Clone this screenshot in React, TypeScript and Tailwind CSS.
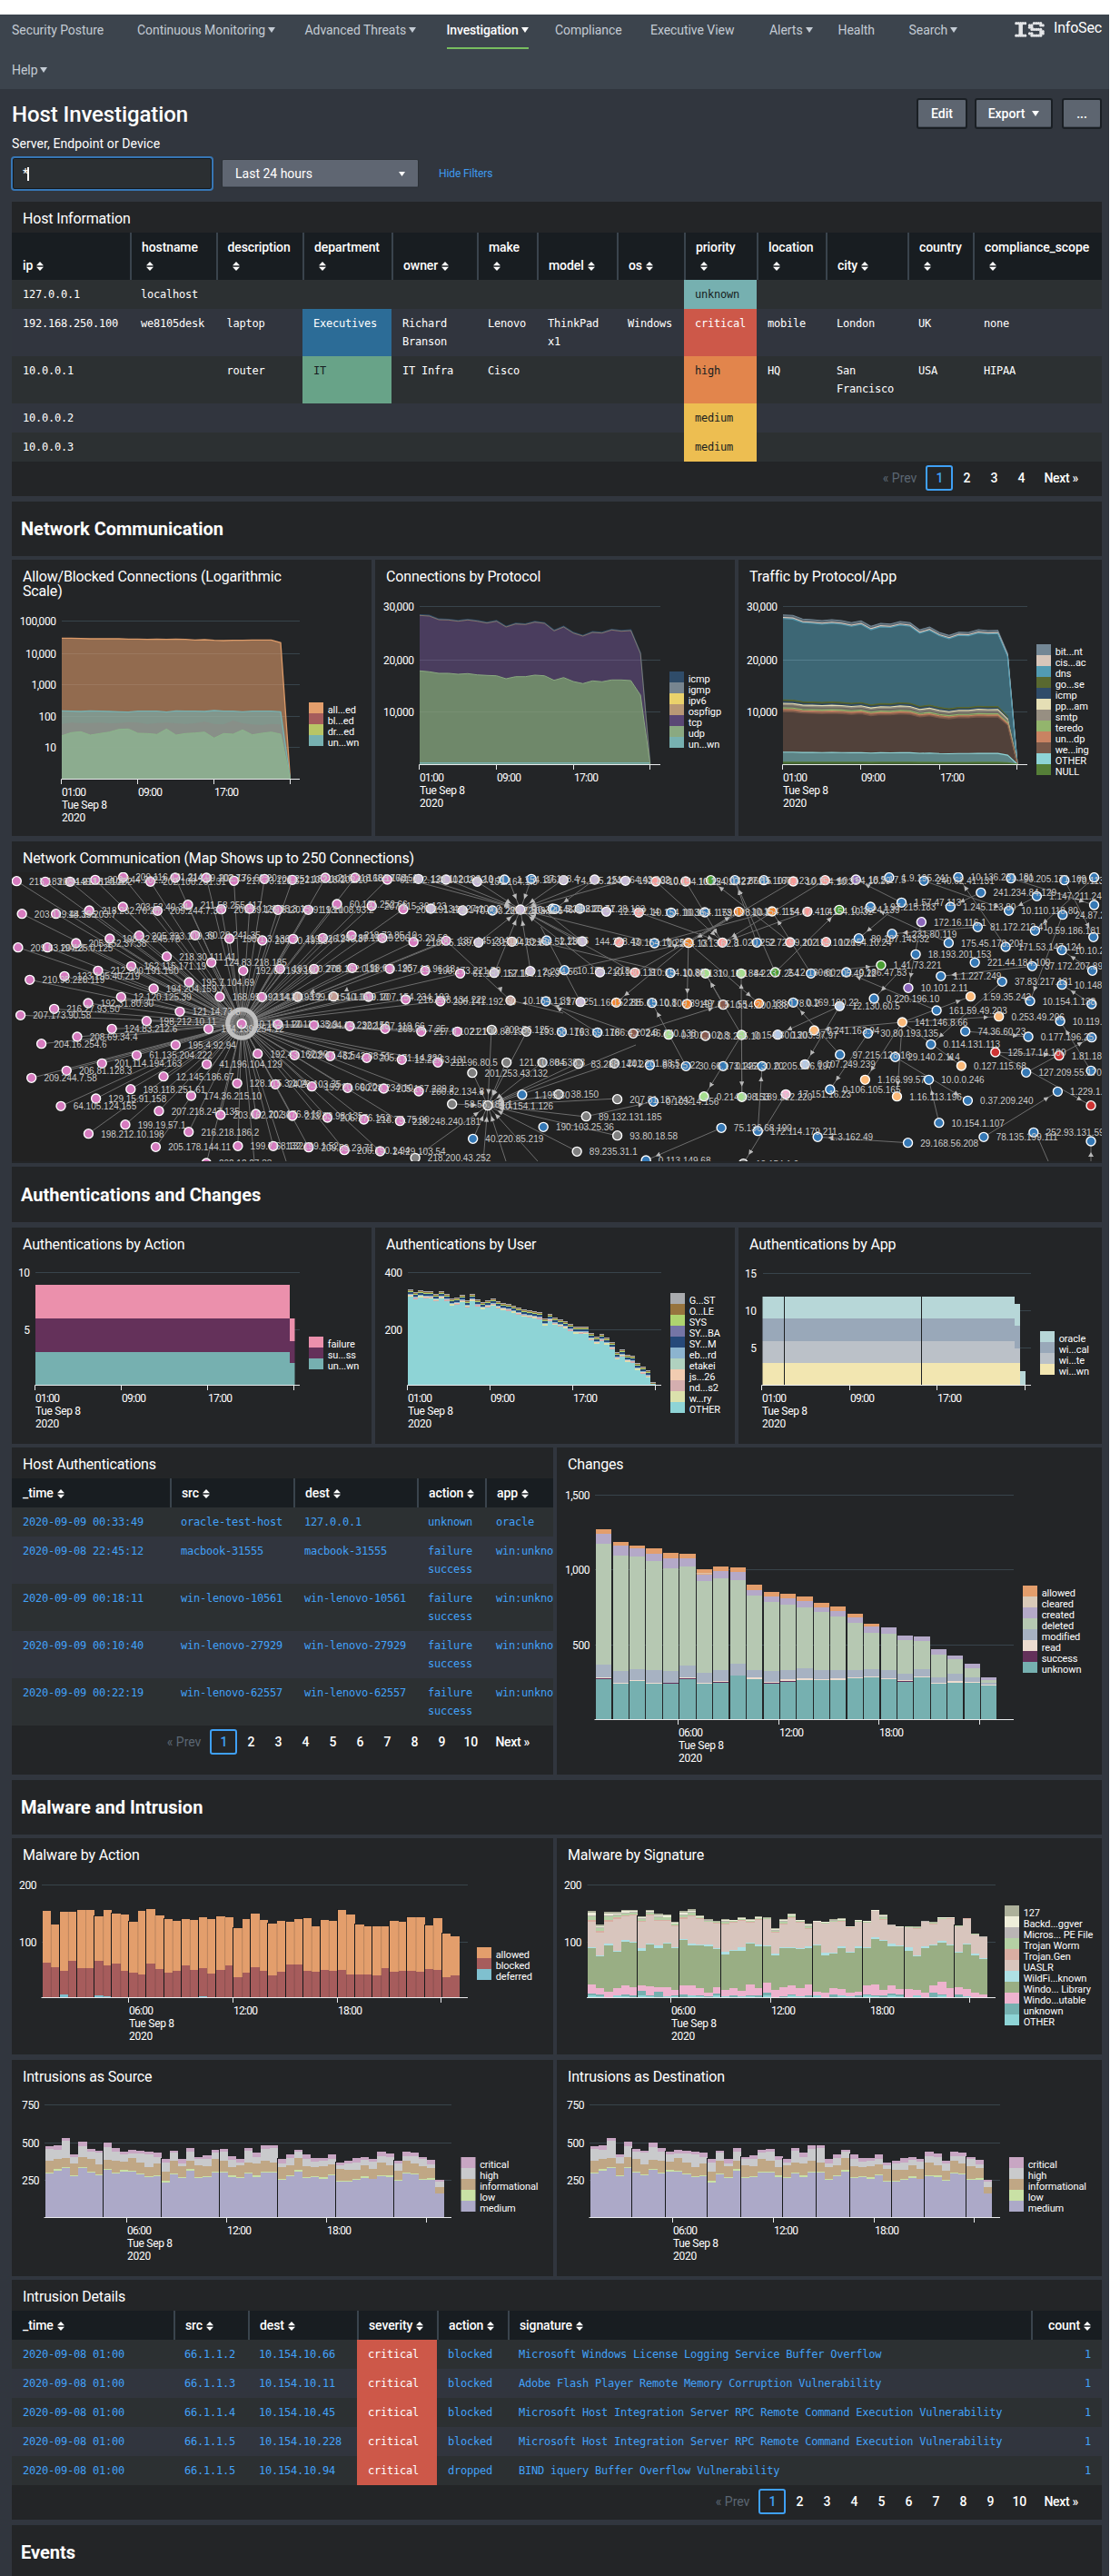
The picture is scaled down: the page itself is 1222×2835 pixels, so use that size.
import React from "react";

type Pt = [number, number];

const TEXT = "#ffffff";
const GRID = "#38444b";

/* ---------- shared bits ---------- */

function Caret({ className = "" }: { className?: string }) {
  return (
    <svg className={"inline-block " + className} width="8" height="6" viewBox="0 0 8 6">
      <path d="M0 0h8L4 6z" fill="currentColor" />
    </svg>
  );
}

function Sort({ className = "" }: { className?: string }) {
  return (
    <svg className={"inline-block align-[-1px] " + className} width="8" height="10" viewBox="0 0 8 10">
      <path d="M0 4.3L4 0l4 4.3zM0 5.7h8L4 10z" fill="#fff" />
    </svg>
  );
}

function Panel({ title, className = "", children }: { title: React.ReactNode; className?: string; children?: React.ReactNode }) {
  return (
    <section className={"flex flex-col overflow-hidden bg-[#232527] " + className}>
      <h3 className="shrink-0 px-3 pt-[11px] pb-[7px] text-[16px] leading-4 tracking-[-0.16px] text-white">{title}</h3>
      {children}
    </section>
  );
}

function Section({ title, className = "" }: { title: string; className?: string }) {
  return (
    <div className={"flex h-[60px] shrink-0 items-center bg-[#232527] pl-2.5 " + className}>
      <h2 className="text-[20px] leading-6 font-bold text-white">{title}</h2>
    </div>
  );
}

function Pager({ last }: { last: number }) {
  const pages = Array.from({ length: last - 1 }, (_, i) => i + 2);
  return (
    <div className="flex h-9 items-center justify-end pr-[26px] text-[14px] font-medium text-white">
      <span className="mr-2.5 font-normal text-[#5c6773]">« Prev</span>
      <span className="flex h-7 w-[30px] items-center justify-center rounded-[3px] border-2 border-[#3fa0f5] text-[#3fa0f5]">1</span>
      {pages.map((p) => (
        <span key={p} className={p > 9 ? "w-[34px] text-center" : "w-[30px] text-center"}>{p}</span>
      ))}
      <span className="ml-2.5 tracking-[-0.3px]">Next »</span>
    </div>
  );
}

/* ---------- navigation ---------- */

const NAV: { t: string; w: string; caret?: boolean; on?: boolean }[] = [
  { t: "Security Posture", w: "w-[138px]" },
  { t: "Continuous Monitoring", w: "w-[184.5px]", caret: true },
  { t: "Advanced Threats", w: "w-[156px]", caret: true },
  { t: "Investigation", w: "w-[119.5px]", caret: true, on: true },
  { t: "Compliance", w: "w-[105px]" },
  { t: "Executive View", w: "w-[131px]" },
  { t: "Alerts", w: "w-[75.5px]", caret: true },
  { t: "Health", w: "w-[78px]" },
  { t: "Search", w: "w-[90px]", caret: true },
  { t: "Help", w: "w-[60px]", caret: true },
];

const LOGO_ROWS = ["11111..01111.", "..1...11...11", "..1...11.....", "..1....11111.", "..1........11", "..1...11...11", "11111..11111."];

function Logo() {
  return (
    <svg width="33" height="17" viewBox="0 0 33 17">
      {LOGO_ROWS.map((row, r) =>
        row.split("").map((c, i) => (c === "1" ? <circle key={r + "-" + i} cx={1.8 + i * 2.45} cy={1.7 + r * 2.25} r="1.6" fill="#e4e6e8" /> : null)),
      )}
      <path d="M6.7 2v13" stroke="#e4e6e8" strokeWidth="4.4" />
    </svg>
  );
}

function Nav() {
  return (
    <header className="flex h-[82px] bg-[#3c444d]">
      <nav className="flex w-[1117px] shrink-0 flex-wrap content-start pl-[13px]">
        {NAV.map((n) => (
          <div key={n.t} className={"h-11 " + n.w}>
            <span
              className={
                "relative inline-flex h-[38px] items-center gap-[3px] pb-0.5 text-[14px] tracking-[-0.05px] whitespace-nowrap " +
                (n.on ? "border-b-2 border-[#78bd5f] font-medium tracking-[-0.15px] text-white" : "border-b-2 border-transparent text-[#c3cbd4]")
              }
            >
              {n.t}
              {n.caret && <Caret />}
            </span>
          </div>
        ))}
      </nav>
      <div className="flex h-8 items-center">
        <Logo />
        <span className="ml-[10px] pb-0.5 text-[16px] tracking-[-0.2px] text-white">InfoSec</span>
      </div>
    </header>
  );
}

/* ---------- tables ---------- */

const MONO = "font-['DejaVu_Sans_Mono',monospace] text-[12px] leading-5 tracking-[-0.22px]";

type Cell = string | { t: string; c: string };

function Table({
  cols,
  rows,
  wrapped = [],
  link = false,
  tall = false,
  lastRight = false,
}: {
  cols: [string, number][];
  rows: Cell[][];
  wrapped?: number[];
  link?: boolean;
  tall?: boolean;
  lastRight?: boolean;
}) {
  const width = cols.reduce((a, c) => a + c[1], 0);
  return (
    <table className="shrink-0 table-fixed border-collapse" style={{ width }}>
      <colgroup>
        {cols.map(([n, w]) => (
          <col key={n} style={{ width: w }} />
        ))}
      </colgroup>
      <thead>
        <tr className={"bg-[#181d21] " + (tall ? "h-[52px]" : "h-8")}>
          {cols.map(([n], i) => (
            <th
              key={n}
              className={
                "px-3 py-1.5 align-bottom text-[14px] leading-5 font-medium tracking-[-0.1px] whitespace-nowrap text-white " +
                (i ? "shadow-[inset_2px_0_0_#3a444d] " : "") +
                (lastRight && i === cols.length - 1 ? "text-right" : "text-left")
              }
            >
              {i ? <span className="inline-block w-[1px]" /> : null}
              {n}
              {wrapped.includes(i) ? (
                <>
                  <br />
                  <Sort className="ml-[6px]" />
                </>
              ) : (
                <Sort className="ml-1" />
              )}
            </th>
          ))}
        </tr>
      </thead>
      <tbody>
        {rows.map((r, ri) => (
          <tr key={ri} className={ri % 2 ? "bg-[#31353e]" : "bg-[#2c3032]"}>
            {r.map((c, i) => {
              const t = typeof c === "string" ? c : c.t;
              const cls = typeof c === "string" ? (link ? "text-[#42a1f8]" : "text-white") : c.c;
              return (
                <td
                  key={i}
                  className={"h-8 px-3 py-1.5 align-top whitespace-pre " + MONO + " " + cls + (lastRight && i === cols.length - 1 ? " text-right" : "")}
                >
                  {t}
                </td>
              );
            })}
          </tr>
        ))}
      </tbody>
    </table>
  );
}

const UNKNOWN = { t: "unknown", c: "bg-[#76b0b0] text-[#171d21]" };
const CRIT = { t: "critical", c: "bg-[#cd5849] text-white font-medium" };
const HIGH = { t: "high", c: "bg-[#e2854c] text-[#171d21]" };
const MEDIUM = { t: "medium", c: "bg-[#edbe51] text-[#171d21]" };

const HOST_COLS: [string, number][] = [
  ["ip", 130], ["hostname", 94.5], ["description", 95.5], ["department", 98], ["owner", 94], ["make", 66], ["model", 88],
  ["os", 74], ["priority", 80], ["location", 76], ["city", 90], ["country", 72], ["compliance_scope", 142],
];
const HOST_ROWS: Cell[][] = [
  ["127.0.0.1", "localhost", "", "", "", "", "", "", UNKNOWN, "", "", "", ""],
  ["192.168.250.100", "we8105desk", "laptop", { t: "Executives", c: "bg-[#2c6c97] text-white" }, "Richard\nBranson", "Lenovo", "ThinkPad\nx1", "Windows", CRIT, "mobile", "London", "UK", "none"],
  ["10.0.0.1", "", "router", { t: "IT", c: "bg-[#68a388] text-[#171d21]" }, "IT Infra", "Cisco", "", "", HIGH, "HQ", "San\nFrancisco", "USA", "HIPAA"],
  ["10.0.0.2", "", "", "", "", "", "", "", MEDIUM, "", "", "", ""],
  ["10.0.0.3", "", "", "", "", "", "", "", MEDIUM, "", "", "", ""],
];

const AUTH_COLS: [string, number][] = [["_time", 174], ["src", 136], ["dest", 136], ["action", 75], ["app", 111]];
const AUTH_ROWS: Cell[][] = [
  ["2020-09-09 00:33:49", "oracle-test-host", "127.0.0.1", "unknown", "oracle"],
  ["2020-09-08 22:45:12", "macbook-31555", "macbook-31555", "failure\nsuccess", "win:unknown"],
  ["2020-09-09 00:18:11", "win-lenovo-10561", "win-lenovo-10561", "failure\nsuccess", "win:unknown"],
  ["2020-09-09 00:10:40", "win-lenovo-27929", "win-lenovo-27929", "failure\nsuccess", "win:unknown"],
  ["2020-09-09 00:22:19", "win-lenovo-62557", "win-lenovo-62557", "failure\nsuccess", "win:unknown"],
];

const INTR_COLS: [string, number][] = [["_time", 178], ["src", 82], ["dest", 120], ["severity", 88], ["action", 78], ["signature", 576], ["count", 78]];
const INTR_ROWS: Cell[][] = [
  ["2020-09-08 01:00", "66.1.1.2", "10.154.10.66", CRIT, "blocked", "Microsoft Windows License Logging Service Buffer Overflow", "1"],
  ["2020-09-08 01:00", "66.1.1.3", "10.154.10.11", CRIT, "blocked", "Adobe Flash Player Remote Memory Corruption Vulnerability", "1"],
  ["2020-09-08 01:00", "66.1.1.4", "10.154.10.45", CRIT, "blocked", "Microsoft Host Integration Server RPC Remote Command Execution Vulnerability", "1"],
  ["2020-09-08 01:00", "66.1.1.5", "10.154.10.228", CRIT, "blocked", "Microsoft Host Integration Server RPC Remote Command Execution Vulnerability", "1"],
  ["2020-09-08 01:00", "66.1.1.5", "10.154.10.94", CRIT, "dropped", "BIND iquery Buffer Overflow Vulnerability", "1"],
];

/* ---------- charts ---------- */

function Chart({ box, children }: { box: [number, number, number, number]; children: React.ReactNode }) {
  return (
    <svg className="block shrink-0" width={box[2]} height={box[3]} viewBox={box.join(" ")} fontFamily="Roboto, sans-serif" fontSize="12">
      {children}
    </svg>
  );
}

function Grid({ x, ys, labels, right }: { x: Pt; ys: number[]; labels: string[]; right: number }) {
  return (
    <g>
      {ys.map((y, i) => (
        <g key={i}>
          <line x1={x[0]} x2={x[1]} y1={y} y2={y} stroke={GRID} strokeWidth="1" />
          <text x={right} y={y + 4.6} fill={TEXT} textAnchor="end" letterSpacing="-0.45">{labels[i]}</text>
        </g>
      ))}
    </g>
  );
}

function Axis({ x, base, ticks, labels }: { x: Pt; base: number; ticks: number[]; labels: string[] }) {
  return (
    <g>
      <line x1={x[0] - 0.5} x2={x[1]} y1={base} y2={base} stroke="#e8eaec" strokeWidth="1" />
      {ticks.map((t) => (
        <line key={t} x1={t} x2={t} y1={base} y2={base + 5.5} stroke="#e8eaec" strokeWidth="1" />
      ))}
      {labels.map((l, i) => (
        <text key={l} x={ticks[i] + 0.5} y={base + 18.2} fill={TEXT} letterSpacing="-0.75">{l}</text>
      ))}
      <text x={ticks[0] + 0.5} y={base + 32.3} fill={TEXT} letterSpacing="-0.3">Tue Sep 8</text>
      <text x={ticks[0] + 0.5} y={base + 46.3} fill={TEXT} letterSpacing="-0.25">2020</text>
    </g>
  );
}

function Legend({ x, y, items }: { x: number; y: number; items: [string, string][] }) {
  return (
    <g>
      {items.map(([name, color], i) => (
        <g key={name + i}>
          <rect x={x} y={y + i * 12} width="16" height="12" fill={color} />
          <text x={x + 20.7} y={y + i * 12 + 11.6} fill={TEXT} fontSize="11" letterSpacing="-0.1">{name}</text>
        </g>
      ))}
    </g>
  );
}

function area(x0: number, step: number, top: number[], base: number) {
  return `M${x0} ${base}` + top.map((y, i) => `L${(x0 + i * step).toFixed(1)} ${y.toFixed(1)}`).join("") + `L${(x0 + (top.length - 1) * step).toFixed(1)} ${base}Z`;
}
function line(x0: number, step: number, top: number[]) {
  return "M" + top.map((y, i) => `${(x0 + i * step).toFixed(1)} ${y.toFixed(1)}`).join("L");
}
function band(x0: number, step: number, top: number[], bot: number[]) {
  return line(x0, step, top) + "L" + bot.map((y, i) => `${(x0 + i * step).toFixed(1)} ${y.toFixed(1)}`).reverse().join("L") + "Z";
}

const at = (o: number, k = 3) => (v: number) => o + v / k;

const DROPPED = [599, 589, 586, 597, 592, 587, 578, 577, 591, 592, 595, 577, 597, 592, 590, 587, 607, 592, 594, 580, 596, 591, 587, 594, 742].map(at(610));
const ALLOWED = [277, 277, 278, 279, 279, 279, 279, 280, 280, 281, 280, 281, 280, 281, 283, 282, 284, 285, 284, 284, 283, 283, 283, 292, 742].map(at(610));
const UNK = [517, 518, 519, 517, 518, 519, 520, 521, 518, 518, 518, 521, 517, 518, 518, 519, 516, 518, 518, 520, 518, 518, 518, 520, 742].map(at(610));
const BLOCKED = [560, 556, 557, 557, 556, 558, 557, 555, 556, 560, 557, 556, 558, 560, 558, 553, 560, 562, 549, 558, 562, 564, 560, 562, 742].map(at(610));

function AllowBlocked() {
  const s = 10.48;
  return (
    <Chart box={[13, 669, 396, 251]}>
      <Grid x={[68, 330]} ys={[683.5, 719.5, 753.5, 788.5, 822.5]} labels={["100,000", "10,000", "1,000", "100", "10"]} right={61.5} />
      <path d={area(68, s, ALLOWED, 857)} fill="#e39e6c" fillOpacity=".58" />
      <path d={line(68, s, ALLOWED)} fill="none" stroke="#dc9a68" strokeWidth="1.3" />
      <path d={area(68, s, UNK, 857)} fill="#77b1b1" fillOpacity=".62" />
      <path d={line(68, s, UNK)} fill="none" stroke="#77b1b1" strokeWidth="1.3" />
      <path d={area(68, s, BLOCKED, 857)} fill="#8e8a86" fillOpacity=".6" />
      <path d={area(68, s, DROPPED, 857)} fill="#8fb893" fillOpacity=".7" />
      <path d={line(68, s, DROPPED)} fill="none" stroke="#8bb58b" strokeWidth="1" />
      <Axis x={[68, 330]} base={857.5} ticks={[67.5, 151.5, 235.5, 319.5]} labels={["01:00", "09:00", "17:00"]} />
      <Legend x={340} y={773} items={[["all...ed", "#e39e6c"], ["bl...ed", "#a65c5c"], ["dr...ed", "#b8c566"], ["un...wn", "#77b1b1"]]} />
    </Chart>
  );
}

const TCP = [202, 204, 216, 217, 221, 217, 221, 227, 221, 240, 230, 232, 224, 228, 253, 240, 260, 270, 258, 260, 250, 254, 252, 328, 693].map(at(610));
const UDP = [385, 388, 393, 393, 396, 394, 398, 400, 401, 411, 404, 404, 399, 401, 416, 407, 420, 427, 418, 421, 415, 415, 417, 465, 693].map(at(610));

function ByProtocol() {
  const s = 10.57;
  return (
    <Chart box={[413, 650, 396, 270]}>
      <Grid x={[462, 727]} ys={[667.5, 726.5, 783.5]} labels={["30,000", "20,000", "10,000"]} right={455.5} />
      <path d={area(462, s, TCP, 841)} fill="#5a4775" fillOpacity=".72" />
      <path d={area(462, s, UDP, 841)} fill="#232527" />
      <path d={area(462, s, UDP, 841)} fill="#8aa981" fillOpacity=".75" />
      <path d="M462 726.5h250M462 783.5h250" stroke="#fff" strokeOpacity=".06" />
      <path d={line(462, s, TCP.map((y) => y - 0.7))} fill="none" stroke="#2f4c69" strokeWidth="1.4" />
      <path d={line(462, s, TCP)} fill="none" stroke="#b89b78" strokeWidth=".6" />
      <path d={line(462, s, UDP)} fill="none" stroke="#8aa981" strokeWidth="1" />
      <path d="M462 839.8h253" stroke="#77b1b1" strokeWidth="1.6" />
      <Axis x={[462, 727]} base={841.5} ticks={[461.5, 546.5, 631.5, 715.5]} labels={["01:00", "09:00", "17:00"]} />
      <Legend x={737} y={739} items={[["icmp", "#2f4c69"], ["igmp", "#778590"], ["ipv6", "#ead26b"], ["ospfigp", "#b89876"], ["tcp", "#5a4775"], ["udp", "#8aa981"], ["un...wn", "#77b1b1"]]} />
    </Chart>
  );
}

const APP_LAYERS: [string, string, number][] = [
  ["bit...nt", "#738795", 1],
  ["cis...ac", "#d7c6ba", 0.983],
  ["dns", "#529bb2", 0.975],
  ["go...se", "#596930", 0.43],
  ["icmp", "#2f4c69", 0.418],
  ["pp...am", "#e5dfb5", 0.408],
  ["smtp", "#978f82", 0.399],
  ["teredo", "#93b56d", 0.377],
  ["un...dp", "#c98362", 0.367],
  ["we...ing", "#78594a", 0.352],
  ["OTHER", "#8ed4d6", 0.081],
  ["NULL", "#557f38", 0.014],
];
const APP_TOP = [200, 202, 214, 216, 219, 216, 219, 226, 220, 238, 228, 230, 222, 226, 250, 240, 258, 268, 257, 258, 249, 252, 251, 328, 692].map(at(610));

function ByApp() {
  const s = 10.75;
  return (
    <Chart box={[813, 650, 400, 270]}>
      <Grid x={[862, 1131]} ys={[667.5, 726.5, 783.5]} labels={["30,000", "20,000", "10,000"]} right={855.5} />
      {APP_LAYERS.map(([n, c, f], i) => {
        const t = APP_TOP.map((y) => 841 - (841 - y) * f);
        const b = APP_TOP.map((y) => 841 - (841 - y) * (APP_LAYERS[i + 1]?.[2] ?? 0));
        return (
          <g key={n}>
            <path d={band(862, s, t, b)} fill={c} fillOpacity={i === 9 ? 0.55 : i === 10 ? 0.55 : i === 2 ? 0.56 : 0.65} />
            <path d={line(862, s, t)} fill="none" stroke={c} strokeWidth="1.1" />
          </g>
        );
      })}
      <path d="M862 726.5h250" stroke="#fff" strokeOpacity=".07" />
      <Axis x={[862, 1131]} base={841.5} ticks={[861.5, 947.5, 1034.5, 1119.5]} labels={["01:00", "09:00", "17:00"]} />
      <Legend x={1141} y={709} items={APP_LAYERS.map(([n, c]) => [n, c] as [string, string])} />
    </Chart>
  );
}

function AuthAction() {
  return (
    <Chart box={[13, 1385, 396, 204]}>
      <Grid x={[39, 330]} ys={[1400.5, 1463.5]} labels={["10", "5"]} right={32.5} />
      <path d="M39 1414h280v37h-280z" fill="#eb90ac" />
      <path d="M39 1451h280v37h-280z" fill="#64315a" />
      <path d="M39 1488h280v36h-280z" fill="#76b0b0" />
      <path d="M319 1451h5.5v25h-5.5z" fill="#eb90ac" />
      <path d="M319 1476h5.5v24h-5.5z" fill="#64315a" />
      <path d="M319 1500h5.5v24h-5.5z" fill="#76b0b0" />
      <Axis x={[39, 330]} base={1524.5} ticks={[38.5, 133.5, 228.5, 323.5]} labels={["01:00", "09:00", "17:00"]} />
      <Legend x={340} y={1471} items={[["failure", "#eb90ac"], ["su...ss", "#64315a"], ["un...wn", "#76b0b0"]]} />
    </Chart>
  );
}

const USER_TOP = [
  387, 396, 390, 393, 393, 402, 393, 402, 417, 414, 405, 423, 402, 420, 429, 423, 417, 426, 432, 435, 441, 447, 453, 456, 459, 462, 483, 468, 480, 486,
  492, 501, 510, 510, 510, 531, 543, 534, 546, 561, 594, 585, 602, 606, 630, 642, 654, 693,
].map(at(1290));
const USERS: [string, string][] = [
  ["G...ST", "#a9abae"], ["O...LE", "#97743e"], ["SYS", "#aed46f"], ["SY...BA", "#7575a6"], ["SY...M", "#26497a"], ["eb...rd", "#8cb4cf"],
  ["etakei", "#b0d1bf"], ["js...26", "#f1ccb1"], ["nd...s2", "#d4aeaf"], ["w...ry", "#dbe1ac"], ["OTHER", "#8ed4d6"],
];

function AuthUser() {
  const w = 5.69;
  return (
    <Chart box={[413, 1385, 396, 204]}>
      <Grid x={[449, 728]} ys={[1400.5, 1463.5]} labels={["400", "200"]} right={442.5} />
      <g shapeRendering="crispEdges">
        {USER_TOP.map((y, i) => (
          <g key={i}>
            <rect x={449 + i * w} y={y} width={w} height={1524 - y} fill="#8ed4d6" />
            {[0, 1, 2, 4, 4, 5, 7 + (i % 3), 9 - (i % 2)].map((c, k) => {
              const yy = Math.round(y) + k;
              return yy < 1523 ? <rect key={k} x={449 + i * w} y={yy} width={w} height="1" fill={USERS[c][1]} /> : null;
            })}
          </g>
        ))}
      </g>
      <Axis x={[449, 728]} base={1524.5} ticks={[448.5, 539.5, 630.5, 721.5]} labels={["01:00", "09:00", "17:00"]} />
      <Legend x={738} y={1423} items={USERS} />
    </Chart>
  );
}

function AuthApp() {
  return (
    <Chart box={[813, 1385, 400, 204]}>
      <Grid x={[840, 1135]} ys={[1401.5, 1442.5, 1483.5]} labels={["15", "10", "5"]} right={832.5} />
      <path d="M839.5 1427H1117v8h6v24h-6v-8H839.5z" fill="#b7d7d8" />
      <path d="M839.5 1451H1117v8h6v25h-6v-8H839.5z" fill="#99a8b9" />
      <path d="M839.5 1476H1117v8h6v16H839.5z" fill="#bbc1c8" />
      <path d="M839.5 1500H1123v24H839.5z" fill="#f2e6b1" />
      <path d="M1123 1509h6v15h-6z" fill="#b7d7d8" />
      <path d="M863.5 1427v97M1014.5 1427v97" stroke="#1d2022" strokeWidth="1" />
      <Axis x={[839, 1135]} base={1524.5} ticks={[838.5, 935.5, 1031.5, 1128.5]} labels={["01:00", "09:00", "17:00"]} />
      <Legend x={1145} y={1465} items={[["oracle", "#b7d7d8"], ["wi...cal", "#99a8b9"], ["wi...te", "#bbc1c8"], ["wi...wn", "#f2e6b1"]]} />
    </Chart>
  );
}

/* Stacked columns: `tops` holds the upper edge of each layer, outermost first. */
function Columns({ x, pitch, width, tops, colors, base, gaps = [] }: { x: number; pitch: number; width: number; tops: number[][]; colors: string[]; base: number; gaps?: number[] }) {
  return (
    <g shapeRendering="crispEdges">
      {tops[0].map((_, i) => (
        <g key={i}>
          {tops.map((layer, l) => {
            const top = layer[i];
            const bot = tops[l + 1] ? tops[l + 1][i] : base;
            return bot > top ? <rect key={l} x={x + i * pitch} y={top} width={width} height={bot - top} fill={colors[l]} /> : null;
          })}
        </g>
      ))}
      {gaps.map((g) => (
        <rect key={"gap" + g} x={Math.round(x + g * pitch) - 1} y={tops[0][g] - 1} width="1" height={base - tops[0][g] + 1} fill="#17191b" />
      ))}
    </g>
  );
}

const CH = [
  [309, 351, 363, 372, 387, 390, 441, 432, 435, 492, 516, 522, 531, 552, 564, 588, 621, 633, 660, 663, 705, 726, 753, 798],
  [324, 364, 372, 390, 405, 405, 459, 447, 450, 510, 531, 537, 545, 567, 579, 600, 629, 633, 660, 663, 705, 726, 753, 798],
  [357, 396, 399, 414, 438, 432, 480, 471, 477, 528, 549, 558, 567, 582, 597, 618, 651, 654, 675, 678, 723, 738, 768, 807],
  [756, 777, 771, 774, 777, 759, 783, 774, 753, 774, 777, 774, 768, 774, 774, 774, 771, 774, 786, 771, 798, 786, 798, 816],
  [798, 816, 807, 816, 816, 798, 816, 810, 792, 798, 813, 804, 801, 804, 801, 798, 795, 801, 807, 795, 816, 810, 813, 822],
  [801, 819, 810, 819, 816, 801, 819, 813, 792, 804, 816, 810, 807, 807, 807, 801, 798, 804, 810, 798, 819, 816, 816, 825],
  [804, 819, 810, 819, 819, 804, 819, 816, 792, 804, 819, 813, 807, 807, 807, 801, 798, 804, 813, 798, 819, 816, 816, 825],
].map((a) => a.map(at(1580)));

function Changes() {
  return (
    <Chart box={[613, 1627, 600, 326]}>
      <Grid x={[655, 1116]} ys={[1645.5, 1727.5, 1810.5]} labels={["1,500", "1,000", "500"]} right={649} />
      <Columns x={656.2} pitch={18.43} width={17.2} tops={CH} colors={["#e39e6c", "#b4a9c8", "#b6c8b2", "#a7b2c2", "#ecdcd0", "#64315a", "#76b0b0"]} base={1892} />
      <path d={`M${656.2 + 6 * 18.43} 1731.8h17.2`} stroke="#ddd0bf" strokeWidth="1" />
      <Axis x={[655, 1116]} base={1892.5} ticks={[746.5, 857.5, 967.5, 1078.5]} labels={["06:00", "12:00", "18:00"]} />
      <Legend
        x={1126}
        y={1745}
        items={[["allowed", "#e39e6c"], ["cleared", "#d9cab9"], ["created", "#b4a9c8"], ["deleted", "#b6c8b2"], ["modified", "#a7b2c2"], ["read", "#ecdcd0"], ["success", "#64315a"], ["unknown", "#76b0b0"]]}
      />
    </Chart>
  );
}

const MAL = [
  408, 450, 411, 411, 405, 405, 425, 405, 416, 419, 442, 408, 402, 422, 433, 439, 433, 436, 428, 433, 425, 428, 462, 433, 416, 436, 448, 439, 442, 433, 430,
  456, 436, 439, 405, 419, 450, 456, 456, 456, 439, 442, 428, 428, 453, 430, 479, 488,
].map(at(1960, 2.851));
const MAL_BLOCK = [
  570, 584, 596, 564, 587, 587, 564, 579, 573, 596, 602, 607, 573, 590, 602, 596, 579, 593, 587, 604, 593, 579, 616, 602, 584, 596, 610, 599, 576, 576, 596,
  599, 593, 596, 593, 607, 607, 607, 610, 587, 599, 596, 596, 599, 590, 593, 616, 610,
].map(at(1960, 2.851));
const MAL_DEF = MAL.map((_, i) => ({ 2: 2195, 6: 2196, 7: 2197, 18: 2197 } as Record<number, number>)[i] ?? 2198);
const EVEN = Array.from({ length: 23 }, (_, i) => (i + 1) * 2);

function MalwareAction() {
  return (
    <Chart box={[13, 2057, 596, 204]}>
      <Grid x={[46, 515]} ys={[2074.5, 2137.5]} labels={["200", "100"]} right={40} />
      <Columns x={46.7} pitch={9.565} width={9.565} tops={[MAL, MAL_BLOCK, MAL_DEF]} colors={["#e39e6c", "#a65c5c", "#7fc0cf"]} base={2198} gaps={EVEN} />
      <path d={EVEN.map((g) => `M${(46.7 + (g - 1) * 9.565).toFixed(1)} ${Math.max(MAL[g - 1], MAL[g - 2]).toFixed(1)}V2198`).join("")} stroke="#232527" strokeOpacity=".35" strokeWidth=".6" />
      <Axis x={[46, 515]} base={2198.5} ticks={[141.5, 256.5, 371.5, 485.5]} labels={["06:00", "12:00", "18:00"]} />
      <Legend x={525} y={2143} items={[["allowed", "#e39e6c"], ["blocked", "#a65c5c"], ["deferred", "#7fc0cf"]]} />
    </Chart>
  );
}

const SIG_LIB = [
  526, 550, 515, 535, 504, 508, 532, 512, 526, 510, 526, 500, 516, 515, 518, 528, 544, 532, 532, 510, 518, 518, 546, 526, 526, 528, 526, 515, 548, 542, 524,
  540, 524, 526, 496, 502, 518, 518, 532, 550, 524, 515, 508, 515, 540, 512, 548, 558,
].map(at(1960, 2.851));
const SIG_PINK = [
  639, 650, 661, 650, 641, 648, 641, 644, 648, 646, 655, 641, 641, 650, 664, 647, 655, 650, 658, 639, 650, 633, 656, 647, 641, 650, 639, 661, 664, 650, 653,
  664, 661, 641, 639, 655, 641, 653, 653, 656, 664, 641, 630, 650, 647, 653, 664, 670,
].map(at(1960, 2.851));
const SIG_UNK = [
  668, 670, 680, 672, 670, 674, 660, 674, 661, 675, 673, 670, 672, 674, 676, 667, 676, 672, 676, 674, 672, 664, 678, 676, 670, 676, 672, 672, 678, 670, 674,
  676, 674, 670, 674, 672, 668, 670, 680, 674, 678, 664, 670, 680, 670, 676, 679, 680,
].map(at(1960, 2.851));
const UASLR_OFF = [34, 26, 30, 22, 20, 16, 16, 16, 24, 20, 14, 26, 24, 12, 10, 8, 18, 8, 10, 12, 12, 6, 14, 18, 14, 8, 16, 4, 6, 10, 12, 5, 6, 6, 4, 18, 4, 4, 2, 8, 3, 8, 5, 4, 3, 2, 2, 2];
const uaslr = MAL.map((y, i) => y + UASLR_OFF[i] / 2.851);
const mix = (f: number) => MAL.map((y, i) => y + (uaslr[i] - y) * f);

function MalwareSignature() {
  const gaps = [6, 11, 16, 21, 27, 33, 38, 44];
  const wild = SIG_LIB.map((y, i) => y - [1.5, 1, 2, 1, 1.8, 1, 2.4, 1, 3.2, 1][i % 10]);
  const other = SIG_UNK.map((y, i) => Math.min(2198, Math.max(y, 2196 + (i % 3))));
  return (
    <Chart box={[613, 2057, 600, 204]}>
      <Grid x={[646.5, 1096]} ys={[2074.5, 2137.5]} labels={["200", "100"]} right={640} />
      <Columns
        x={647}
        pitch={9.175}
        width={9.175}
        tops={[MAL, mix(0.2), mix(0.4), mix(0.5), mix(0.8), uaslr, wild, SIG_LIB, SIG_PINK, SIG_UNK, other]}
        colors={["#adb19b", "#eeeeda", "#b9b5ae", "#b4d0a4", "#d9aea2", "#d8c5bd", "#aee0e4", "#99ae84", "#edb3ce", "#76b0b0", "#8ed4d6"]}
        base={2198}
        gaps={gaps}
      />
      <Axis x={[646.5, 1096]} base={2198.5} ticks={[738.5, 848.5, 957.5, 1067.5]} labels={["06:00", "12:00", "18:00"]} />
      <Legend
        x={1106}
        y={2097}
        items={[
          ["127", "#adb19b"], ["Backd...ggver", "#eeeeda"], ["Micros... PE File", "#b9b5b5"], ["Trojan Worm", "#b4d0a4"], ["Trojan.Gen", "#d9aea2"], ["UASLR", "#d8c5bd"],
          ["WildFi...known", "#aee0e4"], ["Windo... Library", "#99ae84"], ["Windo...utable", "#edb3ce"], ["unknown", "#76b0b0"], ["OTHER", "#8ed4d6"],
        ]}
      />
    </Chart>
  );
}

const INT_TOP = [
  1146, 1143, 1120, 1172, 1132, 1154, 1160, 1135, 1152, 1163, 1157, 1160, 1163, 1166, 1186, 1160, 1186, 1152, 1180, 1174, 1157, 1155, 1177, 1186, 1152, 1166,
  1143, 1143, 1186, 1172, 1157, 1172, 1183, 1183, 1172, 1197, 1192, 1183, 1180, 1186, 1163, 1169, 1192, 1163, 1166, 1180, 1189, 1253,
].map(at(1960, 2.851));
const INT_MED = [
  1232, 1223, 1214, 1240, 1214, 1229, 1238, 1219, 1231, 1227, 1225, 1234, 1242, 1240, 1259, 1234, 1245, 1222, 1245, 1242, 1229, 1229, 1243, 1246, 1231, 1242,
  1229, 1228, 1251, 1240, 1226, 1245, 1243, 1248, 1237, 1257, 1256, 1251, 1246, 1250, 1240, 1243, 1254, 1231, 1234, 1251, 1251, 1293,
].map(at(1960, 2.851));
const INT_LOW = INT_MED.map((y, i) => y - (i === 47 ? 0 : [0.9, 1.9, 0.6, 1, 0.8, 1, 1.6, 0.9][i % 8]));
const INT_INFO = INT_MED.map((y, i) => (i === 47 ? y - 7 : Math.max(INT_TOP[i] + 7, y - 14.6 + ((i * 7) % 5))));
const INT_HIGH = INT_TOP.map((y, i) => y + (i === 47 ? 1.5 : 2.6 + ((i * 5) % 3)));
const INT_ITEMS: [string, string][] = [["critical", "#c8a6c3"], ["high", "#c9cacc"], ["informational", "#c0a785"], ["low", "#c9e1a5"], ["medium", "#aca9c8"]];

function Intrusions({ left, x, barX, pitch, gaps, ticks, legend, right }: { left: number; x: Pt; barX: number; pitch: number; gaps: number[]; ticks: number[]; legend: number; right: number }) {
  return (
    <Chart box={[left, 2301, left > 100 ? 600 : 596, 204]}>
      <Grid x={x} ys={[2316.5, 2358.5, 2399.5]} labels={["750", "500", "250"]} right={right} />
      <Columns x={barX} pitch={pitch} width={pitch} tops={[INT_TOP, INT_HIGH, INT_INFO, INT_LOW, INT_MED]} colors={INT_ITEMS.map((i) => i[1])} base={2440} gaps={gaps} />
      <Axis x={x} base={2440.5} ticks={ticks} labels={["06:00", "12:00", "18:00"]} />
      <Legend x={legend} y={2374} items={INT_ITEMS} />
    </Chart>
  );
}

/* ---------- network map ---------- */

const KIND: Record<string, string> = {
  p: "#d67bbf", l: "#c5b5d6", b: "#3578b5", g: "#808080", n: "#c49c94", s: "#f79a96", G: "#4a9e34", o: "#f2852b",
  L: "#a5dd8f", B: "#875a4e", c: "#b2c8e6", P: "#8c67bb", f: "#fbb979", r: "#cf3434", k: "#f3b5d2",
};

const WEST =
  "47 149 p 215.183.154.9|128 151 p 208.149.181.102|198 151 p 211.128.202|269 145 p 202.144.202.2|348 136 p 209.116.121.214|425 151 p 202.108.201.31|495 138 p 214.99.102.73|583 138 p 202.176.62.20|661 148 p 217.73.128.62|747 142 p 201.251.182.101|826 145 p 210.218.202.10|919 138 p 216.218.168.178|1003 138 p 168.176.152|1094 144 p 61.252.138.10|1182 142 l 124.112.108.10|1260 144 l 202.12.0.11|1348 151 l 151.164.1.8|1425 144 b 1.154.116.9|1501 142 b 37.138.4|" +
  "62 257 p 203.119.44.195|158 257 p 18.35.203.7|252 246 p 218.232.76.26|347 234 p 203.52.40.34|445 247 p 209.244.7.33|531 227 p 211.58.255.117|625 242 p 209.59.139.51|705 240 p 123.95.3.15|785 244 p 207.191.1.10|871 244 p 193.108.93.2|952 225 p 60.191.252.66|1050 231 p 207.115.36.123|1139 242 p 209.191.123.147|1217 240 l 134.127.104.2|1307 246 l 70.233.226.72|1391 246 b 28.12.102.145|1470 243 l 10.32.146.6|1561 240 b 5.28.217|" +
  "51 368 p 209.63.20.13|134 368 p 194.25.0.125|215 354 p 205.152.37.38|310 339 p 198.32.245.78|393 329 p 205.233.109.39|551 328 p 60.28.241.35|648 339 p 198.1.3.136|741 345 p 204.70.49.234|828 340 p 119.226.240.37|912 337 p 199.180.158.9|993 328 p 218.73.85.10|1080 337 p 206.13.29.50|1168 350 p 218.85.139.27|1260 346 p 137.145.204.10|1352 352 l 131.104.62.20|1446 349 n 10.154.52.236|1544 345 b 1.110.6|" +
  "471 398 p 218.30.111.41|597 418 p 124.83.218.185|371 430 p 162.115.171.19|277 445 p 212.200.191.150|182 463 p 123.195.40.219|84 475 p 210.95.228.119|687 445 p 192.88.193.130|791 439 p 193.0.0.278|887 439 p 208.162.0.11|995 436 p 198.6.1.195|1101 439 p 207.19.96.18|1201 445 p 199.173.221.50|1300 454 p 61.157.157.177|1396 452 l 12.167.179.9|1498 446 l 2.234.56|" +
  "534 483 p 195.7.104.69|434 504 p 194.204.159.7|342 532 p 12.120.125.39|249 552 p 192.31.80.30|153 571 p 216.27.93.50|58 592 p 207.173.90.58|621 531 p 168.95.192.14|740 532 p 114.80.93.2|841 531 n 199.2.154.1.109|942 530 n 10.15.0.10|1041 531 p 207.154.234.193|1146 540 p 216.228.134.222|1244 546 p 206.141.192.60|1442 543 n 10.154.1.39|1542 546 b 1.17.125|" +
  "508 580 p 121.14.73.8|414 611 p 198.212.10.11|316 637 p 124.83.212.6|218 663 p 208.69.34.4|117 686 p 204.16.254.6|589 637 p 174.139.254.12|683 620 p 10.154.1.20|785 622 p 12.11.135.9|887 625 p 204.14.232.150|988 628 p 202.157.119.66|1088 637 p 209.34.7.35|1190 646 p 217.9.102.21|1292 646 p 21.100.88.19|1389 640 g 202.56.125|1487 646 g 193.58.176|" +
  "496 690 p 195.4.92.94|386 724 p 61.135.204.222|288 751 p 201.114.194.163|188 775 p 206.81.128.3|89 799 p 209.244.7.58|584 754 p 41.196.104.129|728 719 p 192.43.162.90|832 724 p 202.47.43.5|933 727 p 62.42.88.51|1036 733 p 205.171.14.220|1135 739 p 12.22.63.131|1237 748 p 211.96.80.5|1431 748 g 121.10.80.5|1532 748 g 84.38.3|1334 782 g 201.253.43.132|" +
  "462 794 p 12.145.186.67|369 836 p 193.118.251.61|271 867 p 129.15.91.158|172 892 p 64.105.124.155|670 817 p 128.115.3.104|778 820 p 24.29.103.35|881 827 p 199.20.60.20|982 832 p 60.28.234.10|1084 834 p 205.167.229.2|1183 843 p 200.82.134.8|1475 854 b 1.195.30|540 858 p 174.36.215.10|449 908 p 207.218.247.135|354 953 p 199.19.57.1|250 983 p 198.212.10.198|1277 885 g 58.55.184.1|1378 890 g 10.154.1.126|" +
  "623 921 p 203.162.70.36|723 918 p 202.176.8.10|826 924 p 213.33.98.135|925 930 p 205.176.152|1028 936 p 218.75.75.90|1130 941 p 218.248.240.181|1535 961 b 190.103.25.36|533 977 p 216.218.186.2|440 1027 p 205.178.144.11|672 1024 p 199.7.68.132|772 1024 p 132.199.1.52|872 1028 p 209.59.23.71|973 1037 p 206.190.1.94|1074 1041 p 24.29.103.54|1173 1063 g 218.200.43.252|1336 1000 b 40.220.85.219|583 1080 p 202.12.27.33";

const EAST =
  "24 146 l 74.125.224|112 144 l 151.164.43.102|199 148 l 192.138.0.1|285 150 s 10.154.10.22|369 150 s 10.154.10.27|440 146 G 0.132.86.15|508 146 b 27.85.107|590 146 b 160.123.0.2|673 150 s 10.154.10.33|763 146 s 10.154.10.29|850 144 P 18.5.17.5|944 137 b 1.9.195.241|1042 148 b 240.62.41.131|1139 136 b 10.136.231.181|1288 140 b 90.205.171.169|1439 146 b 70.113.8|1523 137 b 12.4|" +
  "0 241 b 2.188.23.17|70 240 b 10.71.28.193|145 250 l 12.122.14|237 253 s 10.154.10.36|328 253 b 10.154.1.73|423 252 b 159.198.10.2|519 250 o 10.154.1.14|613 249 o 154.17.41.4|713 250 s 10.154.10.32|803 244 G 0.19.24.139|891 234 b 1.97.215.183|979 220 b 1.57.47.113|1117 234 b 1.245.123.80|1203 187 b 241.234.84.129|1282 247 b 10.110.118.80|1361 199 b 1.147.211.24|1434 260 b 24.87.2|1523 228 b 7.1|" +
  "1035 284 P 172.16.116.1|1194 301 b 81.172.213.41|1356 313 b 0.59.186.181|952 323 b 1.231.80.119|858 338 b 89.187.143.32|1521 334 b 2.2|77 348 l 144.228.43|181 351 s 10.154.10.25|281 354 b 10.254.13|377 353 o 0.13.62.8|473 352 s 1.020.252|570 352 b 2.72.99.202|664 351 s 10.154.10.26|766 350 s 10.154.10.24|1112 353 b 175.45.178.201|1273 366 b 171.53.147.124|1432 377 b 10.10.2|1019 391 b 18.193.201.153|" +
  "921 427 G 1.41.73.221|1186 418 b 221.44.184.100|1348 430 b 37.172.207.89|1518 445 b 9.1|27 443 b 10.154.2.218|127 450 l 10.130.1.9|226 451 s 110.154.10.80|326 452 b 10.84.131|425 454 L 10.13.184.2|526 454 L 84.237.254|622 450 G 2.12.180.60|723 454 b 61.205.49.22|823 450 b 0.186.47.53|1090 463 b 1.1.227.249|1263 481 b 37.83.217.131|1432 491 b 10.148.9|998 502 P 10.101.2.11|1174 530 f 1.59.35.242|" +
  "72 548 l 1.16.152.88|173 550 o 215.15.10.8|274 551 b 0.109.89.49|373 555 o 197.1.51.55|475 557 B 0.14.200.138|576 553 o 188.178.0.2|673 550 b 0.169.190.22|901 537 b 0.220.196.10|804 562 c 12.130.60.5|1342 545 b 10.154.1.138|1516 555 b 4.2|1078 576 b 161.59.49.203|1254 596 f 0.253.49.206|981 615 f 141.146.8.66|1427 611 b 10.119.8|" +
  "19 647 b 193.59.176|120 649 b 186.4.202.6|221 652 B 246.140.138|321 656 L 0.101.102.8|425 660 B 0.3.255.10|527 657 L 0.154.30.130|629 656 c 0.203.97.97|732 642 f 0.241.163.94|884 652 b 30.80.193.135|1159 645 b 74.36.60.23|1337 663 b 0.177.196.25|1516 665 b 5.1|1062 688 b 0.114.131.113|1244 714 r 125.17.14.100|1424 725 r 1.81.18|805 722 b 97.215.128.16|961 730 b 29.140.2.114|" +
  "66 752 g 83.238.144.2|168 751 g 201.201.88.5|268 757 b 8.61.5.22|370 760 b 30.66.173.146|475 760 b 0.222.30.20|585 760 b 0.205.196.197|706 754 c 0.107.249.239|1148 759 f 0.127.115.68|1331 781 b 127.209.55.170|1514 775 b 9.9|876 805 f 1.166.99.57|1056 805 b 10.0.0.246|777 837 b 0.106.105.165|966 860 f 1.16.113.196|1166 874 b 0.37.209.240|1420 844 b 1.229.1.7|1514 890 r |" +
  "10 853 g 38.150|176 869 g 207.81.187.242|278 877 b 0.103.14.156|421 860 L 0.214.198.53|528 862 L 1.189.212.220|652 853 k 17.151.16.23|88 926 g 89.132.131.185|176 989 g 93.80.18.58|62 1042 g 89.235.31.1|257 1071 b 0.113.149.68|470 964 b 75.136.68.190|573 974 b 172.114.179.211|742 994 b 1.3.162.49|997 1013 b 29.168.56.208|1085 947 b 10.154.1.107|1211 994 b 78.135.199.111|1352 979 b 252.93.131.59|1514 1008 b |532 1082 g 12.154.1.9";

interface Host { x: number; y: number; k: string; ip: string }
function hosts(src: string, x0: number): Host[] {
  return src.split("|").map((s) => {
    const [x, y, k, ip] = s.split(" ");
    return { x: x0 + +x / 2.566, y: 920 + +y / 3, k, ip: ip || "" };
  });
}
const NODES = [...hosts(WEST, 0), ...hosts(EAST, 611)];
const HUB: Pt = [266.2, 1126.7];
const HUB_GREY: Pt = [537, 1216.7];
const HUB_LILAC: Pt = [572.9, 1001];

/* Directed links between hosts in the eastern half: x1 y1 x2 y2. */
const LINKS =
  "285 150 475 352|369 150 473 352|673 150 377 353|763 146 473 352|237 253 473 352|713 250 473 352|664 351 440 146|570 352 508 146|519 250 377 353|613 249 281 354|377 353 173 550|377 353 373 555|377 353 576 553|622 450 803 244|27 443 377 353|622 450 508 146|226 451 519 250|723 454 613 249|723 454 921 427|475 557 425 454|528 862 526 454|527 657 425 454|527 657 528 862|527 657 421 860|370 760 274 551|221 652 475 557|221 652 -30 548|120 649 -20 548|805 722 673 550|804 562 629 656|804 562 706 754|573 974 585 760|652 853 532 1082|470 964 257 1071|88 926 278 877|997 1013 742 994|884 652 777 837|981 615 732 642|981 615 1174 530|981 615 1254 596|981 615 876 805|981 615 966 860|981 615 1148 759|961 730 1166 874|1085 947 1056 805|1159 645 1337 663|1244 714 1424 725|1244 714 1514 890|1331 781 1516 665|1211 994 1420 844|1263 481 1062 688|1078 576 823 450|1348 430 1090 463|1019 391 901 537|1035 284 998 502|1194 301 952 323|979 220 850 144|979 220 858 338|1042 148 1282 247|1203 187 1117 234|1273 366 1139 136|1439 146 1523 334|1434 260 1342 545|1523 137 1356 313|1288 140 1523 228|1518 445 1432 377|1516 555 1432 491|1514 775 1427 611|1112 353 891 234|1361 199 1282 247|112 144 1 240|850 144 763 146|326 452 -80 340|77 348 -60 220|72 548 -40 300"
    .split("|")
    .map((s) => s.split(" ").map(Number))
    .map(([a, b, c, d]) => [611 + a / 2.566, 920 + b / 3, 611 + c / 2.566, 920 + d / 3]);

const LILAC_ENDS: Pt[] = [[450, 968], [470, 968], [493, 968], [525, 970], [560, 968], [585, 967], [620, 968], [655, 968], [689, 969], [527, 1037], [641, 1036], [721, 1038], [544, 1071], [584, 1068], [660, 1069], [700, 1071], [667, 1003]];
const GREY_ENDS: Pt[] = [[541, 1133], [580, 1135], [520, 1180], [557, 1169], [597, 1169], [636, 1170], [676, 1170], [680, 1209], [615, 1204], [498, 1215], [457, 1274], [521, 1253], [532, 1278], [557, 1278], [592, 1278], [635, 1267], [680, 1250], [645, 1229], [700, 1150]];

function NetworkMap() {
  const ring = (c: Pt, ends: Pt[]) =>
    ends.map(([x, y], i) => {
      const a = Math.atan2(y - c[1], x - c[0]);
      return (
        <g key={i}>
          <line x1={x} y1={y} x2={c[0]} y2={c[1]} stroke="#6d6d6d" strokeWidth="1" />
          <path d="M-3 0L3 -2.6V2.6z" fill="#bdbdbd" transform={`translate(${c[0] + 15 * Math.cos(a)} ${c[1] + 15 * Math.sin(a)}) rotate(${(a * 180) / Math.PI})`} />
        </g>
      );
    });
  return (
    <svg className="block shrink-0" width="1200" height="318" viewBox="13 960 1200 318" fontFamily="Liberation Sans, Arial, sans-serif" fontSize="10">
      <defs>
        <marker id="arrow" markerUnits="userSpaceOnUse" markerWidth="6" markerHeight="6" refX="17" refY="2.7" orient="auto">
          <path d="M0 0L5.5 2.7L0 5.4z" fill="#b8b8b8" />
        </marker>
      </defs>
      <rect x="13" y="960" width="1200" height="318" fill="#222222" />
      {NODES.filter((n) => n.k === "p").map((n, i) => (
        <line key={i} x1={n.x} y1={n.y} x2={HUB[0]} y2={HUB[1]} stroke="#6d6d6d" strokeWidth="1" />
      ))}
      <path d={`M${HUB[0]} ${HUB[1]}L280 1278M${HUB[0]} ${HUB[1]}L315 1278M${HUB[0]} ${HUB[1]}L330 1098M${HUB[0]} ${HUB[1]}L368 1097M492 1036L${HUB[0]} ${HUB[1]}`} stroke="#6d6d6d" />
      <path d="M492 1036L562 1101M562 1101L620 1115M1140 1246L1154 1278M1201 1256V1278" stroke="#6d6d6d" />
      <path d="M548 1087l4 5 1-6zM341 1093l4-5 2 5zM379 1091l3-5 2 5zM575 1104l4-2v4zM1198 1273l3-5 3 5z" fill="#b8b8b8" />
      {ring(HUB_LILAC, LILAC_ENDS)}
      {ring(HUB_GREY, GREY_ENDS)}
      {LINKS.map(([a, b, c, d], i) => (
        <line key={i} x1={a} y1={b} x2={c} y2={d} stroke="#6d6d6d" strokeWidth="1" markerEnd="url(#arrow)" />
      ))}
      <circle cx={HUB[0]} cy={HUB[1]} r="11.5" fill="none" stroke="#8a8a8a" strokeWidth="4" strokeDasharray="1.2 .6" />
      <circle cx={HUB[0]} cy={HUB[1]} r="15.6" fill="none" stroke="#bfbfbf" strokeWidth="5" />
      {NODES.map((n, i) => (
        <circle key={i} cx={n.x} cy={n.y} r="5" fill={KIND[n.k]} stroke="#fff" strokeWidth="1.4" />
      ))}
      {NODES.map((n, i) => (
        <text key={i} x={n.x + 13.7} y={n.y + 4} fill="#cbcbcb">{n.ip}</text>
      ))}
    </svg>
  );
}

/* ---------- page ---------- */

const BTN = "flex h-[34px] items-center justify-center rounded-[3px] border-2 border-[#1a1f24] bg-[#5d6570] text-[14px] font-medium text-white shadow-[inset_0_-1px_0_#464e58]";

export default function App() {
  return (
    <div className="h-[2835px] w-[1222px] overflow-hidden bg-white pt-4 font-[Roboto,sans-serif]">
      <div className="flex h-[2819px] w-[1221px] flex-col bg-[#31363e]">
        <Nav />
        <div className="flex h-[124px] shrink-0 flex-col pt-2.5 pr-2 pl-[13px]">
          <div className="flex h-[34px] items-start justify-between">
            <h1 className="pt-0.5 text-[24px] leading-8 font-medium tracking-[-0.1px] text-white">Host Investigation</h1>
            <div className="flex">
              <div className={BTN + " w-14"}>Edit</div>
              <div className={BTN + " ml-2 w-[86px] gap-2"}>Export <Caret /></div>
              <div className={BTN + " ml-2.5 w-11"}>...</div>
            </div>
          </div>
          <label className="mt-[6px] text-[14px] leading-5 tracking-[0.08px] text-white">Server, Endpoint or Device</label>
          <div className="mt-1 -ml-px flex h-[38px] items-center">
            <div className="flex h-[38px] w-[223px] items-center rounded-[4px] border-2 border-[#3776b4] bg-[#2b2f32] pl-[11px] text-[14px] text-white shadow-[inset_0_0_0_1px_#14181b]">
              *<span className="ml-[-1px] h-[15px] w-[2px] bg-white" />
            </div>
            <div className="ml-[9px] flex h-8 w-[217px] items-center justify-between rounded-[2px] border border-[#2b3036] bg-[#5f6672] pr-[14px] pl-[14px] text-[14px] text-white shadow-[inset_0_-1px_0_#454c56]">
              Last 24 hours <svg width="7" height="5" viewBox="0 0 7 5"><path d="M0 0h7L3.500 5z" fill="#fff" /></svg>
            </div>
            <span className="ml-[22px] text-[12px] tracking-[-0.1px] text-[#3f9bf0]">Hide Filters</span>
          </div>
        </div>

        <main className="flex w-[1213px] flex-col pl-[13px]">
          <Panel title="Host Information" className="h-[324px]">
            <Table cols={HOST_COLS} rows={HOST_ROWS} wrapped={[1, 2, 3, 5, 8, 9, 11, 12]} tall />
            <Pager last={4} />
          </Panel>

          <Section title="Network Communication" className="mt-1.5" />
          <div className="mt-1 grid grid-cols-[396px_396px_400px] gap-1">
            <Panel title={<>Allow/Blocked Connections (Logarithmic<br />Scale)</>} className="h-[304px]"><div className="mt-[3px]"><AllowBlocked /></div></Panel>
            <Panel title="Connections by Protocol" className="h-[304px]"><ByProtocol /></Panel>
            <Panel title="Traffic by Protocol/App" className="h-[304px]"><ByApp /></Panel>
          </div>
          <Panel title="Network Communication (Map Shows up to 250 Connections)" className="mt-1.5 h-[354px]"><NetworkMap /></Panel>

          <Section title="Authentications and Changes" className="mt-1 h-[61px]" />
          <div className="mt-1.5 grid grid-cols-[396px_396px_400px] gap-1">
            <Panel title="Authentications by Action" className="h-[238px]"><AuthAction /></Panel>
            <Panel title="Authentications by User" className="h-[238px]"><AuthUser /></Panel>
            <Panel title="Authentications by App" className="h-[238px]"><AuthApp /></Panel>
          </div>
          <div className="mt-1 grid grid-cols-[596px_600px] gap-1">
            <Panel title="Host Authentications" className="h-[360px]">
              <Table cols={AUTH_COLS} rows={AUTH_ROWS} link />
              <Pager last={10} />
            </Panel>
            <Panel title="Changes" className="h-[360px]"><Changes /></Panel>
          </div>

          <Section title="Malware and Intrusion" className="mt-1.5" />
          <div className="mt-1 grid grid-cols-[596px_600px] gap-1">
            <Panel title="Malware by Action" className="h-[238px]"><MalwareAction /></Panel>
            <Panel title="Malware by Signature" className="h-[238px]"><MalwareSignature /></Panel>
          </div>
          <div className="mt-1.5 grid grid-cols-[596px_600px] gap-1">
            <Panel title="Intrusions as Source" className="h-[238px]">
              <Intrusions left={13} x={[49, 497]} barX={49.8} pitch={9.14} gaps={[7, 14, 21, 28, 35, 42]} ticks={[139.5, 249.5, 359.5, 469.5]} legend={507.5} right={43} />
            </Panel>
            <Panel title="Intrusions as Destination" className="h-[238px]">
              <Intrusions left={613} x={[649, 1101]} barX={650} pitch={9.21} gaps={[5, 9, 14, 18, 23, 27, 31, 36, 40, 45]} ticks={[740.5, 851.5, 962.5, 1072.5]} legend={1111} right={643} />
            </Panel>
          </div>
          <Panel title="Intrusion Details" className="mt-1 h-[264px]">
            <Table cols={INTR_COLS} rows={INTR_ROWS} link lastRight />
            <Pager last={10} />
          </Panel>
          <Section title="Events" className="mt-1.5" />
        </main>
      </div>
    </div>
  );
}
